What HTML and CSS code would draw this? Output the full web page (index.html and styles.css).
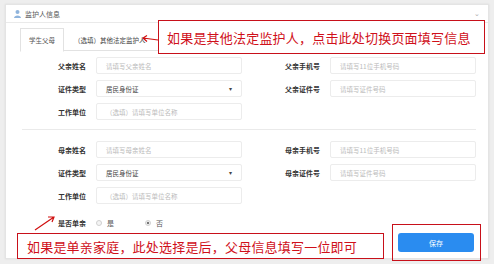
FILE: index.html
```html
<!DOCTYPE html>
<html lang="zh">
<head>
<meta charset="utf-8">
<link rel="stylesheet" href="styles.css">
</head>
<body>
<div class="page">
  <div class="panel">
    <div class="panel-head">
      <svg class="head-icon" width="7" height="8" viewBox="0 0 7 8"><circle cx="3.5" cy="2" r="2" fill="#8fb4dc"/><path d="M0 8 C0 4.5 7 4.5 7 8 Z" fill="#8fb4dc"/></svg>
      <span class="head-title">监护人信息</span>
      <span class="head-caret">⌄</span>
    </div>
    <div class="panel-body">
      <div class="tabs">
        <div class="tab active">学生父母</div>
        <div class="tab">（选填）其他法定监护人</div>
      </div>
      <div class="form">
        <label class="lbl">父亲姓名</label>
        <div class="inp ph">请填写父亲姓名</div>
        <label class="lbl">父亲手机号</label>
        <div class="inp ph">请填写11位手机号码</div>

        <label class="lbl">证件类型</label>
        <div class="inp sel">居民身份证<span class="arr">▾</span></div>
        <label class="lbl">父亲证件号</label>
        <div class="inp ph">请填写证件号码</div>

        <label class="lbl">工作单位</label>
        <div class="inp ph">（选填）请填写单位名称</div>
        <span></span><span></span>
      </div>
      <div class="divider"></div>
      <div class="form">
        <label class="lbl">母亲姓名</label>
        <div class="inp ph">请填写母亲姓名</div>
        <label class="lbl">母亲手机号</label>
        <div class="inp ph">请填写11位手机号码</div>

        <label class="lbl">证件类型</label>
        <div class="inp sel">居民身份证<span class="arr">▾</span></div>
        <label class="lbl">母亲证件号</label>
        <div class="inp ph">请填写证件号码</div>

        <label class="lbl">工作单位</label>
        <div class="inp ph">（选填）请填写单位名称</div>
        <span></span><span></span>
      </div>
      <div class="single">
        <label class="lbl">是否单亲</label>
        <div class="radios">
          <span class="radio"><i class="dot"></i>是</span>
          <span class="radio"><i class="dot on"></i>否</span>
        </div>
      </div>
      <div class="actions">
        <button class="save">保存</button>
      </div>
    </div>
  </div>

  <div class="note note-top">如果是其他法定监护人，点击此处切换页面填写信息</div>
  <div class="note note-bottom">如果是单亲家庭，此处选择是后，父母信息填写一位即可</div>
  <div class="save-box"></div>
  <svg class="arrow arrow-top" width="18" height="8" viewBox="0 0 18 8"><path d="M17 5 L2 3 M6 0.5 L2 3 L6 6.5" stroke="#d01010" stroke-width="1.2" fill="none"/></svg>
  <svg class="arrow arrow-bottom" width="22" height="16" viewBox="0 0 22 16"><path d="M1 15 L20 2 M14 2 L20 2 L18 7" stroke="#d01010" stroke-width="1.2" fill="none"/></svg>
</div>
</body>
</html>
```

FILE: styles.css
```css
* { box-sizing: border-box; }
html, body { margin: 0; padding: 0; }
body {
  width: 494px;
  height: 264px;
  background: #eeeeee;
  font-family: "Noto Sans CJK SC", "Noto Sans", sans-serif;
  overflow: hidden;
}
.page {
  position: relative;
  width: 494px;
  height: 264px;
  padding: 4px 5px 0 5px;
}
.panel {
  background: #fff;
  width: 484px;
  height: 255px;
  border: 1px solid #e4e4e4;
  box-shadow: 0 0 2px rgba(0,0,0,0.08);
}
.panel-head {
  height: 18px;
  display: flex;
  align-items: center;
  padding: 0 8px;
  border-bottom: 1px solid #eaeaea;
  gap: 4px;
}
.head-title { font-size: 7px; color: #555; }
.head-caret { margin-left: auto; font-size: 7px; color: #aaa; line-height: 1; }
.panel-body { padding: 5px 0 0 14px; }
.tabs {
  display: flex;
  height: 23px;
  border-bottom: 1px solid #e2e2e2;
  width: 456px;
}
.tab {
  font-size: 6.5px;
  color: #444;
  padding: 0 10px;
  display: flex;
  align-items: center;
  height: 23px;
}
.tab.active {
  border: 1px solid #e2e2e2;
  border-bottom-color: #fff;
  background: #fff;
  height: 24px;
  padding: 0 8px;
  color: #555;
}
.form {
  display: grid;
  grid-template-columns: 64px 146px 68px 146px;
  column-gap: 10px;
  row-gap: 6px;
  margin-top: 6px;
  margin-left: 2px;
}
.lbl {
  font-size: 7px;
  font-weight: bold;
  color: #333;
  text-align: right;
  align-self: center;
}
.inp {
  height: 17px;
  border: 1px solid #ececec;
  border-radius: 2px;
  font-size: 6.5px;
  padding: 0 9px;
  display: flex;
  align-items: center;
  color: #444;
}
.inp.ph { color: #bbb; }
.sel { justify-content: space-between; }
.arr { font-size: 6px; color: #444; }
.divider {
  height: 1px;
  background: #eaeaea;
  margin: 9px 0 0 2px;
  width: 454px;
}
.divider + .form { margin-top: 11px; }
.single {
  display: grid;
  grid-template-columns: 64px auto;
  column-gap: 10px;
  margin: 14px 0 0 2px;
  height: 10px;
}
.radios { display: flex; gap: 31px; align-items: center; }
.radio {
  font-size: 7px;
  color: #555;
  display: flex;
  align-items: center;
  gap: 5px;
}
.dot {
  width: 6px;
  height: 6px;
  border-radius: 50%;
  border: 1px solid #d0d0d0;
  background: #f4f4f4;
  display: inline-block;
}
.dot.on {
  background: radial-gradient(circle, #777 0 1.3px, #f4f4f4 1.6px);
}
.actions {
  display: flex;
  justify-content: flex-end;
  padding-right: 14px;
  margin-top: 5px;
}
.save {
  width: 76px;
  height: 19px;
  border: none;
  border-radius: 3px;
  background: #2a8cf0;
  color: #fff;
  font-family: inherit;
  font-size: 7px;
  padding: 0;
}
.note {
  position: absolute;
  border: 1px solid #c8101a;
  background: #fff;
  color: #d0101a;
  font-size: 13px;
  letter-spacing: 0.2px;
  display: flex;
  align-items: center;
  white-space: nowrap;
}
.note-top {
  left: 158px;
  top: 20px;
  width: 327px;
  height: 34px;
  padding-left: 8px;
}
.note-bottom {
  left: 17px;
  top: 233px;
  width: 367px;
  height: 26px;
  padding-left: 9px;
}
.save-box {
  position: absolute;
  left: 392px;
  top: 224px;
  width: 89px;
  height: 37px;
  border: 1px solid #c8101a;
}
.arrow { position: absolute; }
.arrow-top { left: 141px; top: 35px; }
.arrow-bottom { left: 34px; top: 215px; }
```
